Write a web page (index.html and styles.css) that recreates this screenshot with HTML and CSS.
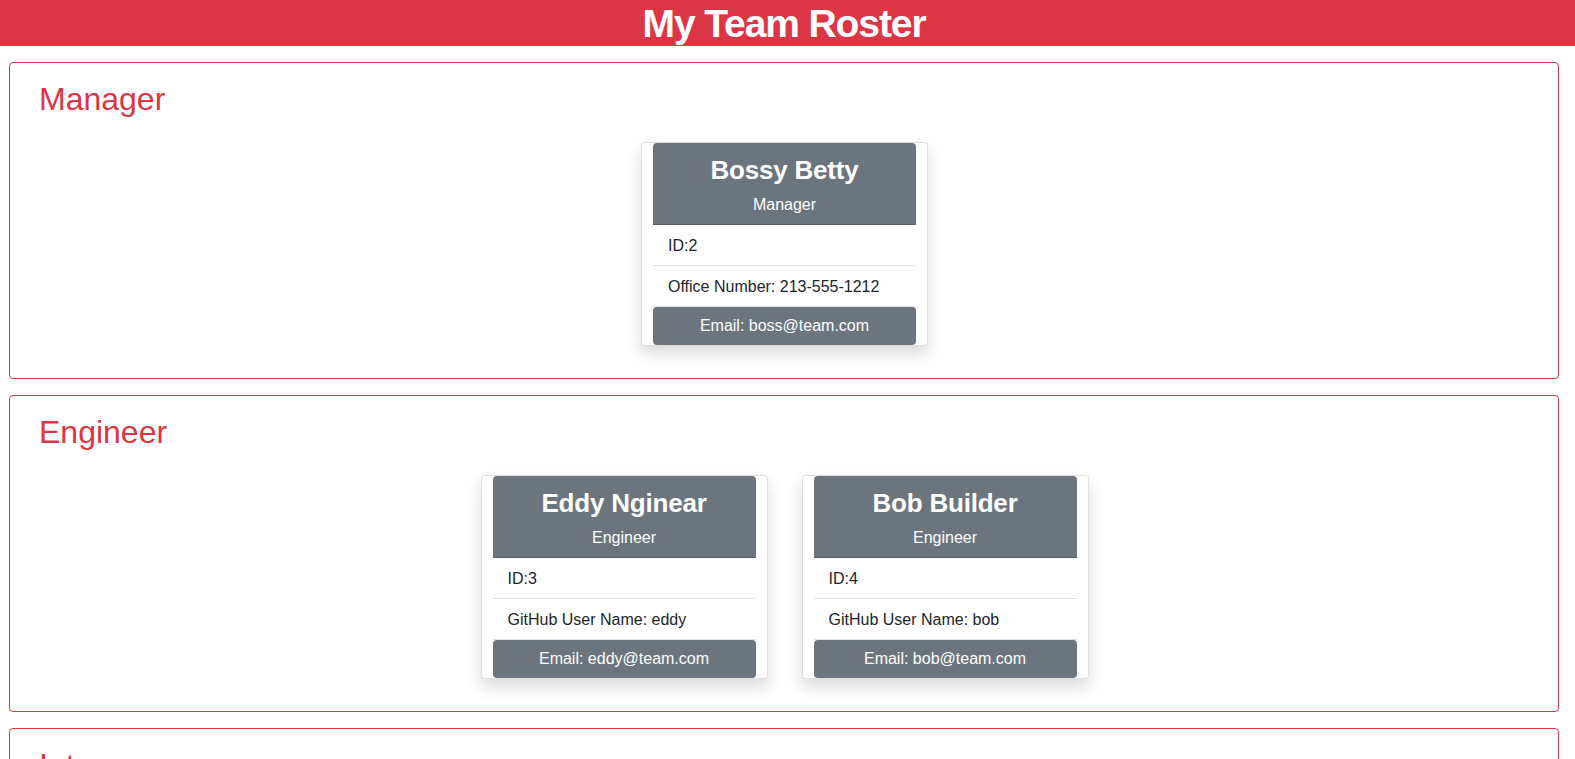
FILE: index.html
```html
<!DOCTYPE html>
<html lang="en">
<head>
<meta charset="utf-8">
<title>My Team Roster</title>
<link rel="stylesheet" href="styles.css">
</head>
<body>
<header class="banner">
  <h1 class="banner-title">My Team Roster</h1>
</header>

<section class="role-section">
  <h2 class="role-title">Manager</h2>
  <div class="card-row">
    <div class="card">
      <div class="card-head">
        <h3 class="card-name">Bossy Betty</h3>
        <div class="card-role">Manager</div>
      </div>
      <ul class="card-list">
        <li class="card-item">ID:2</li>
        <li class="card-item">Office Number: 213-555-1212</li>
      </ul>
      <div class="card-email">Email: boss@team.com</div>
    </div>
  </div>
</section>

<section class="role-section">
  <h2 class="role-title">Engineer</h2>
  <div class="card-row">
    <div class="card">
      <div class="card-head">
        <h3 class="card-name">Eddy Nginear</h3>
        <div class="card-role">Engineer</div>
      </div>
      <ul class="card-list">
        <li class="card-item">ID:3</li>
        <li class="card-item">GitHub User Name: eddy</li>
      </ul>
      <div class="card-email">Email: eddy@team.com</div>
    </div>
    <div class="card">
      <div class="card-head">
        <h3 class="card-name">Bob Builder</h3>
        <div class="card-role">Engineer</div>
      </div>
      <ul class="card-list">
        <li class="card-item">ID:4</li>
        <li class="card-item">GitHub User Name: bob</li>
      </ul>
      <div class="card-email">Email: bob@team.com</div>
    </div>
  </div>
</section>

<section class="role-section">
  <h2 class="role-title">Intern</h2>
  <div class="card-row">
    <div class="card">
      <div class="card-head">
        <h3 class="card-name">Ian Tern</h3>
        <div class="card-role">Intern</div>
      </div>
      <ul class="card-list">
        <li class="card-item">ID:5</li>
        <li class="card-item">School: State University</li>
      </ul>
      <div class="card-email">Email: ian@team.com</div>
    </div>
  </div>
</section>
</body>
</html>
```
FILE: styles.css
```css
* {
  box-sizing: border-box;
}

body {
  margin: 0;
  font-family: "Liberation Sans", Arial, sans-serif;
  font-size: 16px;
  line-height: 1.5;
  color: #212529;
  background: #fff;
}

.banner {
  background: #dc3545;
  height: 46px;
  padding: 1px 16px 0 9px;
}

.banner-title {
  margin: 0;
  text-align: center;
  color: #fff;
  font-size: 39px;
  font-weight: 700;
  line-height: 45px;
  letter-spacing: -1.1px;
}

.role-section {
  margin: 16px 16px 0 9px;
  border: 1px solid #dc3545;
  border-radius: 4px;
  padding: 17px 28px 32px 29px;
}

.role-title {
  margin: 0 0 24px;
  color: #dc3545;
  font-size: 32px;
  font-weight: 400;
  line-height: 38px;
}

.card-row {
  display: flex;
  justify-content: center;
  gap: 34px;
}

.card {
  width: 287px;
  border: 1px solid rgba(0, 0, 0, 0.125);
  border-radius: 4px;
  padding: 0 11px;
  background: #fff;
  box-shadow: 0 8px 16px rgba(0, 0, 0, 0.15);
}

.card-head {
  background: #6c757d;
  color: #fff;
  text-align: center;
  border-radius: 4px 4px 0 0;
  padding: 11px 8px 7px;
  border-bottom: 1px solid rgba(0, 0, 0, 0.18);
}

.card-name {
  margin: 0 0 7px;
  font-size: 26px;
  font-weight: 700;
  line-height: 32px;
  letter-spacing: -0.2px;
}

.card-role {
  font-size: 16px;
  line-height: 24px;
}

.card-list {
  list-style: none;
  margin: 0;
  padding: 0;
}

.card-item {
  padding: 9px 15px 7px;
  border-bottom: 1px solid #dee2e6;
}

.card-email {
  background: #6c757d;
  color: #fff;
  text-align: center;
  border-radius: 4px;
  padding: 7px 12px;
  line-height: 24px;
}
```
